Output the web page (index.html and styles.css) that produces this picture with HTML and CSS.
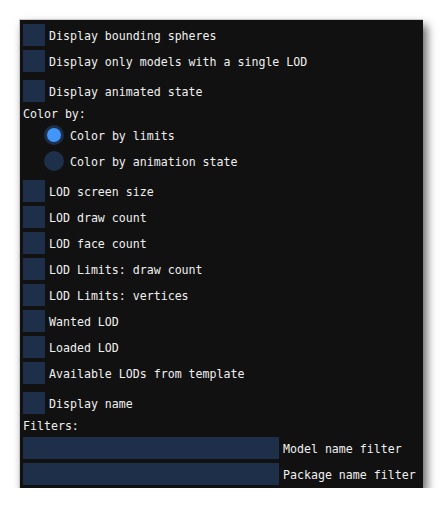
FILE: index.html
```html
<!DOCTYPE html>
<html>
<head>
<meta charset="utf-8">
<link rel="stylesheet" href="styles.css">
</head>
<body>
<div class="panel">
  <div class="row"><span class="box"></span><span class="label">Display bounding spheres</span></div>
  <div class="row mt4"><span class="box"></span><span class="label">Display only models with a single LOD</span></div>
  <div class="row mt8"><span class="box"></span><span class="label">Display animated state</span></div>
  <div class="text mt2">Color by:</div>
  <div class="row radio-row mt2"><span class="radio on"></span><span class="rlabel">Color by limits</span></div>
  <div class="row radio-row mt4"><span class="radio"></span><span class="rlabel">Color by animation state</span></div>
  <div class="row mt8"><span class="box"></span><span class="label">LOD screen size</span></div>
  <div class="row mt4"><span class="box"></span><span class="label">LOD draw count</span></div>
  <div class="row mt4"><span class="box"></span><span class="label">LOD face count</span></div>
  <div class="row mt4"><span class="box"></span><span class="label">LOD Limits: draw count</span></div>
  <div class="row mt4"><span class="box"></span><span class="label">LOD Limits: vertices</span></div>
  <div class="row mt4"><span class="box"></span><span class="label">Wanted LOD</span></div>
  <div class="row mt4"><span class="box"></span><span class="label">Loaded LOD</span></div>
  <div class="row mt4"><span class="box"></span><span class="label">Available LODs from template</span></div>
  <div class="row mt8"><span class="box"></span><span class="label">Display name</span></div>
  <div class="text mt2">Filters:</div>
  <div class="row mt3"><span class="field"></span><span class="label">Model name filter</span></div>
  <div class="row mt4"><span class="field"></span><span class="label">Package name filter</span></div>
</div>
</body>
</html>
```
FILE: styles.css
```css
html, body {
  margin: 0;
  padding: 0;
  background: #ffffff;
}

.panel {
  box-sizing: border-box;
  margin: 19px 0 0 19px;
  width: 404px;
  height: 469px;
  background: #111111;
  border-top: 1px solid #c9c9c9;
  border-left: 1px solid #c9c9c9;
  padding: 4px 3px 3px 3px;
  box-shadow: 4px 6px 9px rgba(0, 0, 0, 0.6);
  display: flex;
  flex-direction: column;
  font-family: "DejaVu Sans Mono", "Liberation Mono", monospace;
  font-size: 11.6px;
  color: #f0f0f0;
}

.row {
  display: flex;
  align-items: center;
  height: 22px;
  flex: none;
}

.box {
  width: 22px;
  height: 22px;
  background: #1e2f49;
  flex: none;
}

.label {
  margin-left: 4px;
  padding-top: 2px;
  line-height: 22px;
  white-space: nowrap;
}

.text {
  height: 18px;
  line-height: 20px;
  flex: none;
  white-space: nowrap;
}

.radio-row {
  padding-left: 21px;
}

.radio {
  box-sizing: border-box;
  width: 20px;
  height: 20px;
  border-radius: 50%;
  background: #1e2f49;
  flex: none;
}

.radio.on {
  background: #4296fa;
  border: 3px solid #1e2f49;
}

.rlabel {
  margin-left: 6px;
  padding-top: 2px;
  line-height: 22px;
  white-space: nowrap;
}

.field {
  width: 256px;
  height: 22px;
  background: #1e2f49;
  flex: none;
}

.mt2 { margin-top: 2px; }
.mt3 { margin-top: 3px; }
.mt4 { margin-top: 4px; }
.mt8 { margin-top: 8px; }
```
